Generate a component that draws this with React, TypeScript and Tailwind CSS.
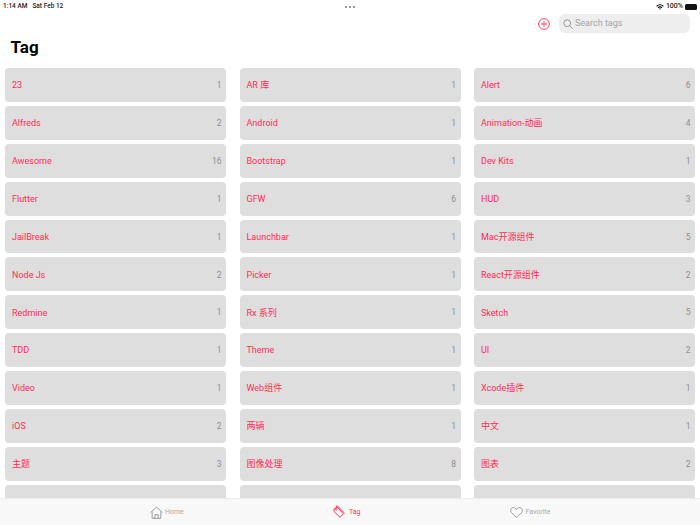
import React from "react";

const tags: [string, number][] = [
  ["23", 1], ["AR 库", 1], ["Alert", 6],
  ["Alfreds", 2], ["Android", 1], ["Animation-动画", 4],
  ["Awesome", 16], ["Bootstrap", 1], ["Dev Kits", 1],
  ["Flutter", 1], ["GFW", 6], ["HUD", 3],
  ["JailBreak", 1], ["Launchbar", 1], ["Mac开源组件", 5],
  ["Node Js", 2], ["Picker", 1], ["React开源组件", 2],
  ["Redmine", 1], ["Rx 系列", 1], ["Sketch", 5],
  ["TDD", 1], ["Theme", 1], ["UI", 2],
  ["Video", 1], ["Web组件", 1], ["Xcode插件", 1],
  ["iOS", 2], ["两辆", 1], ["中文", 1],
  ["主题", 3], ["图像处理", 8], ["图表", 2],
  ["", 0], ["", 0], ["", 0],
];

export default function App() {
  return (
    <div className="relative flex h-[525px] w-[700px] flex-col overflow-hidden bg-white font-['Roboto','Noto_Sans_CJK_SC',sans-serif]">
      <div className="grid h-[12px] shrink-0 grid-cols-3 items-center pl-[3px] pr-[3px] pt-[1px] text-[7px] font-medium text-[#222]">
        <div className="flex gap-[5px] text-[6.5px]">
          <span>1:14 AM</span>
          <span>Sat Feb 12</span>
        </div>
        <div className="flex justify-center gap-[2px]">
          <i className="h-[2px] w-[2px] rounded-full bg-[#777]" />
          <i className="h-[2px] w-[2px] rounded-full bg-[#777]" />
          <i className="h-[2px] w-[2px] rounded-full bg-[#777]" />
        </div>
        <div className="flex items-center justify-end gap-[2px]">
          <svg width="8" height="6" viewBox="0 0 9 7">
            <path d="M0 2.2a6.4 6.4 0 0 1 9 0L8 3.2a5 5 0 0 0-7 0zM1.7 3.9a4 4 0 0 1 5.6 0l-1 1a2.6 2.6 0 0 0-3.6 0zM3.4 5.6a1.6 1.6 0 0 1 2.200 0L4.500 6.800z" fill="#111" />
          </svg>
          <span>100%</span>
          <span className="flex h-[6px] w-[12px] rounded-[1.5px] bg-[#111]" />
        </div>
      </div>

      <div className="flex h-[23px] shrink-0 items-center justify-end gap-[9px] pr-[10px]">
        <svg width="12" height="12" viewBox="0 0 12 12" fill="none" stroke="#ff2d55" strokeWidth="0.9">
          <circle cx="6" cy="6" r="5.4" />
          <path d="M6 3v6M3 6h6" />
        </svg>
        <div className="flex h-[19px] w-[131px] items-center gap-[2px] rounded-[6px] bg-[#eeeeee] pl-[4px]">
          <svg width="10" height="10" viewBox="0 0 10 10" fill="none" stroke="#8e8e93" strokeWidth="0.9">
            <circle cx="4.2" cy="4.2" r="3.4" />
            <path d="M6.7 6.7L9.4 9.4" strokeLinecap="round" />
          </svg>
          <span className="text-[9px] text-[#a3a3a8]">Search tags</span>
        </div>
      </div>

      <h1 className="ml-[10.5px] mt-[-2px] mb-[6px] h-[29px] shrink-0 text-[17px] leading-[29px] font-bold text-black">Tag</h1>

      <div className="grid shrink-0 grid-cols-3 gap-x-[13.5px] gap-y-[4px] overflow-hidden px-[5px]">
        {tags.map(([name, count], i) => (
          <div key={i} className="flex h-[33.9px] items-center justify-between rounded-[4px] bg-[#dedede] pl-[7px] pr-[4.500px]">
            <span className="pt-[2px] text-[9px] text-[#ff2d55]">{name}</span>
            <span className="pt-[1px] text-[8.5px] text-[#8e8e93]">{count || ""}</span>
          </div>
        ))}
      </div>

      <div className="absolute bottom-0 left-0 right-0 h-[27px] border-t border-[#ececec] bg-[#f8f8f8] text-[7px]">
        <div className="absolute left-[149.500px] top-[7px] flex items-center gap-[2.500px] text-[#aaaaaa]">
          <svg width="13" height="13" viewBox="0 0 12 12" fill="none" stroke="#8e8e93" strokeWidth="0.8">
            <path d="M0.500 6L6 1l5.500 5M2 5v6.400h8V5M4.500 11.400V8h3v3.400" />
          </svg>
          <span>Home</span>
        </div>
        <div className="absolute left-[333px] top-[6px] flex items-center gap-[4px] text-[#ff2d55]">
          <svg width="12" height="14" viewBox="0 0 12 13" fill="none" stroke="#ff2d55" strokeWidth="1">
            <path d="M1 3.500L4 1.500l6.500 6.800-3.500 3.500L1 6z" />
            <path d="M3 1l1.500-.4L11.500 7.500" />
            <circle cx="3.200" cy="3.800" r="0.700" />
          </svg>
          <span>Tag</span>
        </div>
        <div className="absolute left-[509.500px] top-[7px] flex items-center gap-[3px] text-[#aaaaaa]">
          <svg width="13" height="13" viewBox="0 0 12 12" fill="none" stroke="#8e8e93" strokeWidth="0.8">
            <path d="M6 10.800L1.300 6C-.5 3.500 1.500 1.200 3.500 1.500 4.800 1.700 5.500 2.500 6 3.300c.5-.8 1.200-1.600 2.500-1.800 2-.3 4 2 2.200 4.500z" />
          </svg>
          <span>Favorite</span>
        </div>
      </div>
    </div>
  );
}
